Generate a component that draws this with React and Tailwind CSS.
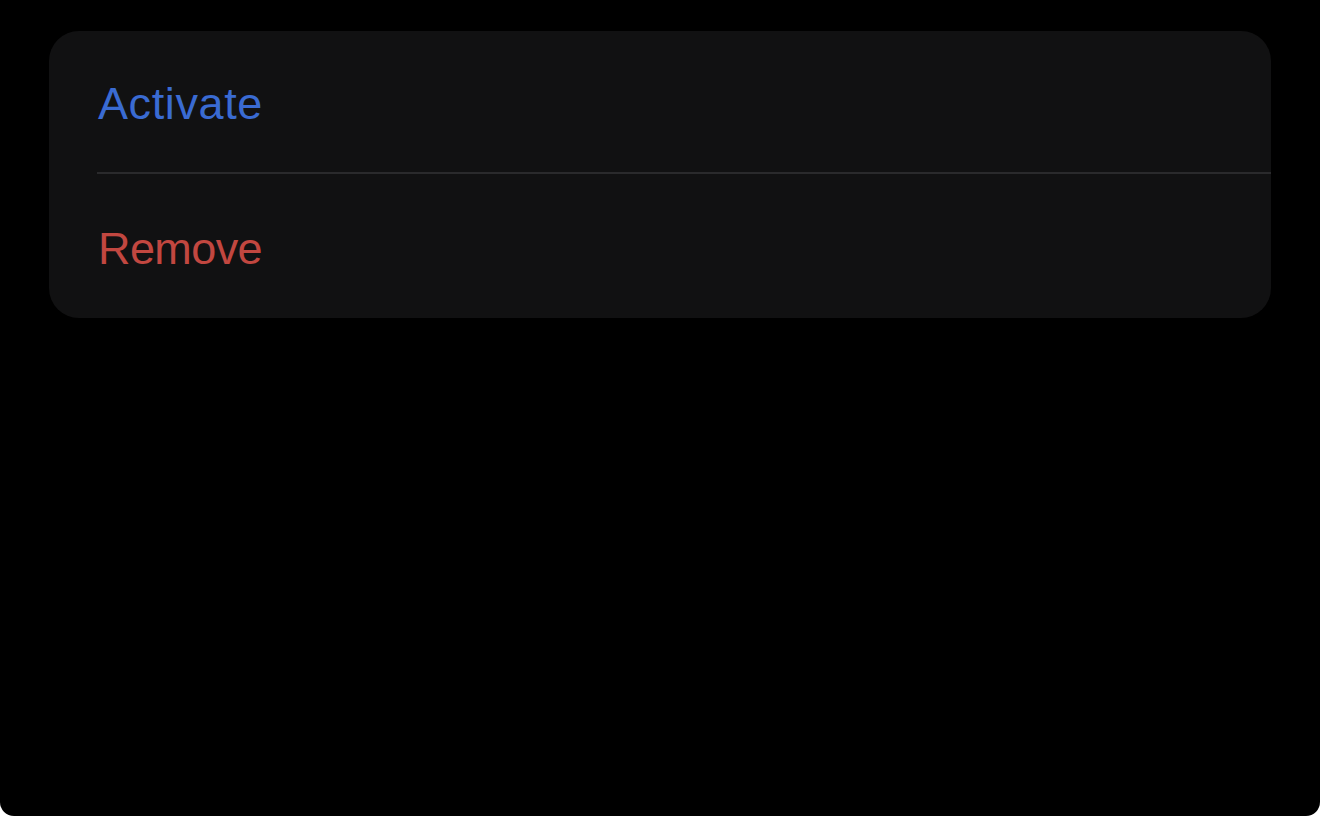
const ActionRow = ({ label, className }) => (
    <div className={`h-[141px] w-full flex items-center pl-[49px] pt-[4px] text-[45px] leading-none ${className}`}>
        {label}
    </div>
);

const App = () => {
    return (
        <div className="w-[1320px] h-[816px] bg-white" style={{ fontFamily: '"Liberation Sans", Arial, sans-serif' }}>
            <div className="w-full h-full bg-black rounded-b-[14px] pt-[31px] px-[49px]">
                <div className="bg-[#111112] rounded-[30px] overflow-hidden">
                    <ActionRow label="Activate" className="text-[#3a6bd2] tracking-[0.6px]" />
                    <div className="ml-[48px] h-[2px] bg-[#2a2a2c]" />
                    <ActionRow label="Remove" className="h-[144px] text-[#c24740] tracking-[-0.6px]" />
                </div>
            </div>
        </div>
    );
};

export default App;
